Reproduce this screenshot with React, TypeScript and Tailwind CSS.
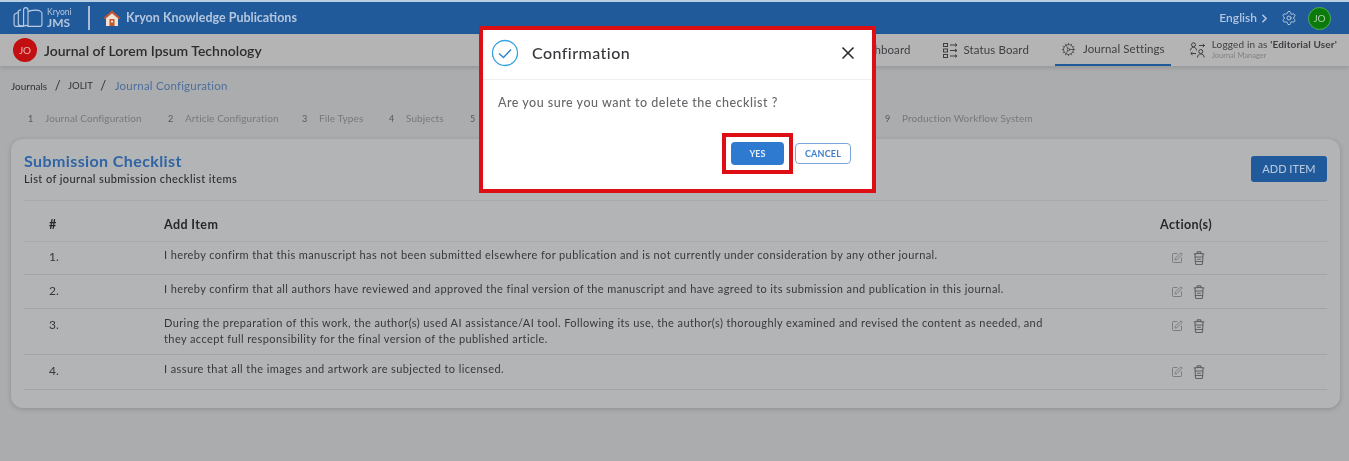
import React from "react";
import { Settings, Cog, SquarePen, X, ChevronRight } from "lucide-react";

const FONT = "font-['Lato','Noto_Sans',sans-serif]";

function BookLogo() {
  return (
    <svg width="30" height="24" viewBox="0 0 34 26" fill="none" stroke="#b9cbe2" strokeWidth="1.300" strokeLinejoin="round">
      <path d="M6 6.500 2.200 8.500c-1 .6-1 1-1 2v10c0 1.500 1 2 2 2h8" />
      <path d="M9 3.500 6 5v14c0 2 1 3 3 3h3" />
      <path d="M12 22.500V4c0-1.800 1-2.800 2.500-2.800S17 2.500 17 4v18.500c-1-1.500-3-1.500-5 0Z" />
      <path d="M17 6c1.500-1.500 5-2 8-2s5 .5 6.500 1.500c1 .7 1.300 1.300 1.300 2.500v12c0 1.500-.8 2.500-2.300 2.500H17" />
    </svg>
  );
}

function House() {
  return (
    <svg width="18" height="16" viewBox="0 0 18 16">
      <path d="M3 8v8h12V8L9 3Z" fill="#efe3d6" />
      <path d="M9 .5 .5 8l1.500 1.300L9 3.200l7 6.100L17.500 8Z" fill="#c9562a" />
      <rect x="6.500" y="9" width="5" height="7" fill="#c9562a" />
      <rect x="8" y="10.500" width="2" height="2" fill="#efe3d6" />
    </svg>
  );
}

function StatusBoardIcon() {
  return (
    <svg width="15" height="15" viewBox="0 0 15 15" fill="none" stroke="#3d3f42" strokeWidth="1">
      <rect x=".5" y=".5" width="4" height="3" />
      <rect x=".5" y="6" width="4" height="3" />
      <rect x=".5" y="11.500" width="4" height="3" />
      <path d="M7 2h7M12 .5 14 2l-2 1.500M7 7.500h7M12 6l2 1.500L12 9M7 13h7M12 11.500l2 1.500-2 1.500" />
    </svg>
  );
}

function UsersSwapIcon() {
  return (
    <svg width="15" height="16" viewBox="0 0 15 16" fill="none" stroke="#3d3f42" strokeWidth="1">
      <circle cx="3.500" cy="2.800" r="2" />
      <path d="M.5 8.500c0-2 1.300-3.200 3-3.200s3 1.200 3 3.200" />
      <circle cx="10.800" cy="9.500" r="2" />
      <path d="M7.500 15.500c0-2.300 1.500-3.500 3.300-3.500s3.300 1.200 3.300 3.500" />
      <path d="M9 3.500h5.500M12.800 2l1.700 1.500-1.700 1.500M6 11.500H.8M2.500 10 .8 11.500 2.500 13" />
    </svg>
  );
}

function TrashIcon() {
  return (
    <svg width="12" height="14" viewBox="0 0 12 14" fill="none" stroke="#606367" strokeWidth="1.100" strokeLinecap="round" strokeLinejoin="round">
      <path d="M1 3c3-.7 7-.7 10 0M4.200 2.500V1.200c0-.2.200-.4.400-.4h2.800c.2 0 .4.200.4.400v1.300" />
      <path d="M2 3.200 2.500 12.500c0 .6.400 1 1 1h5c.6 0 1-.4 1-1L10 3.200" />
      <path d="M2.200 6h7.600M2.400 10.500h7.200M4.500 8.300h3" />
    </svg>
  );
}

function Step({ n, label, className }: { n: number; label?: string; className: string }) {
  return (
    <div className={`flex items-center ${className}`}>
      <span className="w-[19px] pl-[2px] pt-[2px] text-[9px] text-[#55585c]">{n}</span>
      {label && <span className="text-[10px] text-[#76797c] tracking-[0.1px] whitespace-nowrap">{label}</span>}
    </div>
  );
}

const rows = [
  { cls: "h-[33px] pt-[5px]", text: ["I hereby confirm that this manuscript has not been submitted elsewhere for publication and is not currently under consideration by any other journal."] },
  { cls: "h-[34px] pt-[6px]", text: ["I hereby confirm that all authors have reviewed and approved the final version of the manuscript and have agreed to its submission and publication in this journal."] },
  { cls: "h-[46px] pt-[6px]", text: ["During the preparation of this work, the author(s) used AI assistance/AI tool. Following its use, the author(s) thoroughly examined and revised the content as needed, and", "they accept full responsibility for the final version of the published article."] },
  { cls: "h-[35px] pt-[6px]", text: ["I assure that all the images and artwork are subjected to licensed."] },
];

export default function App() {
  return (
    <div className={`${FONT} relative h-[461px] w-[1349px] overflow-hidden bg-[#abacae] text-[#26282b] blur-[0.5px]`}>
      <header className="flex h-[34px] items-center justify-between border-t-2 border-[#b9cee0] bg-[#215a9b] pl-[13px] pr-[18px] text-[#b4c6dd]">
        <div className="flex items-center">
          <BookLogo />
          <div className="ml-[4px] flex w-[27px] flex-col">
            <span className="text-[8.500px] leading-[10px]">Kryoni</span>
            <span className="text-[12px] leading-[12px] font-bold">JMS</span>
          </div>
          <div className="ml-[14px] h-[24px] w-[2px] bg-[#a7bcd6]" />
          <div className="ml-[13px]"><House /></div>
          <span className="ml-[5px] text-[12.500px] font-bold">Kryon Knowledge Publications</span>
        </div>
        <div className="flex items-center">
          <span className="text-[12px] font-semibold">English</span>
          <ChevronRight size={13} strokeWidth={3} className="ml-[1px]" />
          <Settings size={16} strokeWidth={1.5} className="ml-[10px]" />
          <div className="ml-[11px] flex h-[23px] w-[23px] items-center justify-center rounded-full border border-[#4fb04f] bg-[#0b7a0b] text-[10px] text-[#a6d0a6]">JO</div>
        </div>
      </header>

      <nav className="flex h-[32px] items-center justify-between bg-[#b4b4b4] pl-[13px] pr-[12px] shadow-[0_2px_4px_rgba(0,0,0,0.12)]">
        <div className="flex items-center">
          <div className="flex h-[24px] w-[24px] items-center justify-center rounded-full bg-[#c20f12] text-[10px] text-[#e8b5b5]">JO</div>
          <span className="ml-[7px] text-[14px] font-semibold text-[#2c2d2f]">Journal of Lorem Ipsum Technology</span>
        </div>
        <div className="flex h-full items-center text-[11.500px] text-[#3d3f42] tracking-[0.1px]">
          <span>Dashboard</span>
          <div className="ml-[32px] flex items-center gap-[6px]"><StatusBoardIcon /><span>Status Board</span></div>
          <div className="ml-[26px] flex h-full items-center gap-[7px] border-b-2 border-[#215a9b] px-[6px]"><Cog size={15} strokeWidth={1.2} /><span>Journal Settings</span></div>
          <div className="ml-[19px] flex items-center gap-[7px]">
            <UsersSwapIcon />
            <div className="flex flex-col leading-[12px]">
              <span className="text-[10px] tracking-[0.15px]">Logged in as <b>'Editorial User'</b></span>
              <span className="text-[7.500px] tracking-normal text-[#808285]">Journal Manager</span>
            </div>
          </div>
        </div>
      </nav>

      <div className="flex h-[40px] items-center gap-[7.500px] pl-[11px] text-[9.500px] text-[#303236]">
        <span className="text-[10px]">Journals</span><span className="text-[13px]">/</span><span>JOLIT</span><span className="text-[13px]">/</span>
        <span className="ml-[1px] text-[11.500px] tracking-[0.2px] text-[#4d6f9c]">Journal Configuration</span>
      </div>

      <div className="flex h-[24px] items-center pl-[26px]">
        <Step n={1} label="Journal Configuration" className="w-[140px]" />
        <Step n={2} label="Article Configuration" className="w-[134px]" />
        <Step n={3} label="File Types" className="w-[87px]" />
        <Step n={4} label="Subjects" className="w-[81px]" />
        <Step n={5} className="w-[415px]" />
        <Step n={9} label="Production Workflow System" className="w-[150px]" />
      </div>

      <section className="mx-[11px] mt-[9px] h-[269px] w-[1329px] rounded-[12px] bg-[#b3b4b5] px-[13px] pt-[12px] shadow-[0_1px_5px_rgba(0,0,0,0.18)]">
        <div className="flex h-[50px] items-start justify-between border-b border-[#a8a9ab]">
          <div className="flex flex-col">
            <span className="text-[16px] leading-[20px] font-bold tracking-[0.4px] text-[#2f64a5]">Submission Checklist</span>
            <span className="mt-[2px] text-[11px] leading-[12px] font-medium tracking-[0.4px] text-[#2c2e31]">List of journal submission checklist items</span>
          </div>
          <button className="mt-[5px] h-[26px] w-[76px] rounded-[3px] bg-[#215a9b] text-[11px] font-medium text-[#b4c6dd]">ADD ITEM</button>
        </div>

        <div className="flex h-[41px] items-center border-b border-[#a8a9ab] pt-[9px] text-[12.500px] font-bold tracking-[0.4px] text-[#26282b]">
          <span className="w-[140px] pl-[25px]">#</span>
          <span className="w-[996px]">Add Item</span>
          <span>Action(s)</span>
        </div>

        {rows.map((r, i) => (
          <div key={i} className={`flex items-start border-b border-[#a3a4a6] ${r.cls}`}>
            <span className="mt-[2px] w-[140px] pl-[25px] text-[12px] leading-[16px] text-[#36383b]">{i + 1}.</span>
            <div className="w-[1007px] text-[11px] leading-[16px] tracking-[0.4px] text-[#36383b]">
              {r.text.map((t) => <div key={t} className="whitespace-nowrap">{t}</div>)}
            </div>
            <div className="mt-[4px] flex items-center gap-[10px]">
              <SquarePen size={12} strokeWidth={1.6} className="text-[#6c6e71]" />
              <TrashIcon />
            </div>
          </div>
        ))}
      </section>

      <div className="absolute left-[479px] top-[26px] h-[167px] w-[397px] border-[4px] border-[#dd0f14] bg-white">
        <div className="flex h-[50px] items-center border-b border-[#efefef] pb-[4px] pl-[8px] pr-[14px]">
          <svg width="28" height="28" viewBox="0 0 28 28" fill="none">
            <circle cx="14" cy="14" r="12.500" stroke="#36a3e0" strokeWidth="1.300" />
            <path d="M8 14.500 12.500 18.500 20 10.500" stroke="#2f86d0" strokeWidth="1.500" />
          </svg>
          <span className="ml-[13px] text-[16px] font-medium tracking-[0.45px] text-[#36383b]">Confirmation</span>
          <X size={20} strokeWidth={2} className="ml-auto text-[#2c2c2c]" />
        </div>
        <p className="mt-[14px] pl-[15px] text-[12.500px] font-medium tracking-[0.5px] text-[#66686b]">Are you sure you want to delete the checklist ?</p>
        <div className="absolute right-[21px] top-[103px] flex items-center">
          <div className="border-[4px] border-[#dd0f14] p-[5px]">
            <button className="block h-[23px] w-[53px] rounded-[4px] bg-[#2f7ad1] text-[9px] font-bold text-[#e5eefa]">YES</button>
          </div>
          <button className="ml-[2px] h-[21px] w-[56px] rounded-[4px] border border-[#7aa6d8] bg-white text-[9px] font-bold tracking-[0.2px] text-[#3f80cc]">CANCEL</button>
        </div>
      </div>
    </div>
  );
}
